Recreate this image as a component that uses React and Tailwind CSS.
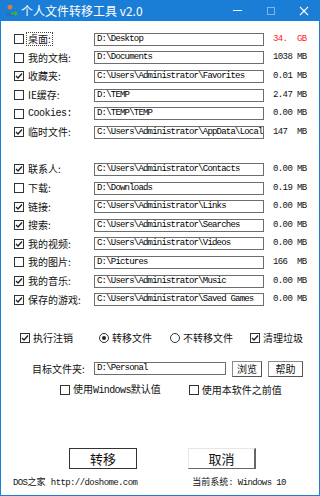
import React from 'react';

const CN = { fontFamily: '"Noto Sans CJK SC", "Noto Sans", sans-serif' };
const MONO = { fontFamily: '"Liberation Mono", "DejaVu Sans Mono", monospace' };

const ROWS = [
  { label: '桌面:', path: 'D:\\Desktop', size: '34.  GB', checked: false, red: true, focus: true },
  { label: '我的文档:', path: 'D:\\Documents', size: '1038 MB', checked: false },
  { label: '收藏夹:', path: 'C:\\Users\\Administrator\\Favorites', size: '0.01 MB', checked: true },
  { label: 'IE缓存:', path: 'D:\\TEMP', size: '2.47 MB', checked: false },
  { label: 'Cookies:', path: 'D:\\TEMP\\TEMP', size: '0.00 MB', checked: false, mono: true },
  { label: '临时文件:', path: 'C:\\Users\\Administrator\\AppData\\Local', size: '147  MB', checked: true },
  null,
  { label: '联系人:', path: 'C:\\Users\\Administrator\\Contacts', size: '0.00 MB', checked: true },
  { label: '下载:', path: 'D:\\Downloads', size: '0.19 MB', checked: false },
  { label: '链接:', path: 'C:\\Users\\Administrator\\Links', size: '0.00 MB', checked: true },
  { label: '搜索:', path: 'C:\\Users\\Administrator\\Searches', size: '0.00 MB', checked: true },
  { label: '我的视频:', path: 'C:\\Users\\Administrator\\Videos', size: '0.00 MB', checked: true },
  { label: '我的图片:', path: 'D:\\Pictures', size: '166  MB', checked: false },
  { label: '我的音乐:', path: 'C:\\Users\\Administrator\\Music', size: '0.00 MB', checked: true },
  { label: '保存的游戏:', path: 'C:\\Users\\Administrator\\Saved Games', size: '0.00 MB', checked: true },
];

function Check({ checked }) {
  return (
    <div className="w-[10px] h-[10px] border border-[#333] bg-white flex items-center justify-center shrink-0">
      {checked && (
        <svg width="8" height="8" viewBox="0 0 8 8">
          <path d="M1 4 L3 6 L7 1.5" fill="none" stroke="#222" strokeWidth="1.4" />
        </svg>
      )}
    </div>
  );
}

function Radio({ checked }) {
  return (
    <div className="w-[10px] h-[10px] rounded-full border border-[#333] bg-white flex items-center justify-center shrink-0">
      {checked && <div className="w-[4px] h-[4px] rounded-full bg-[#222]" />}
    </div>
  );
}

function Edit({ value, className = '' }) {
  return (
    <div
      className={`h-[13px] border border-[#6d6d6d] bg-white pl-[2px] flex items-center overflow-hidden whitespace-pre text-[9px] tracking-[-0.8px] text-black leading-none shrink-0 ${className}`}
      style={MONO}
    >
      {value}
    </div>
  );
}

function FileRow({ row }) {
  if (!row) return <div className="h-[18.6px]" />;
  return (
    <div className="h-[18.6px] flex items-center">
      <div className="pl-[13px] w-[93px] flex items-center shrink-0">
        <Check checked={row.checked} />
        <span
          className={`ml-[3px] px-px text-[10px] leading-[12px] text-[#111] whitespace-nowrap ${row.focus ? 'outline outline-1 outline-dotted outline-[#444]' : ''} ${row.mono ? 'tracking-[-0.5px]' : ''}`}
          style={row.mono ? MONO : CN}
        >
          {row.label}
        </span>
      </div>
      <Edit value={row.path} className="w-[170px]" />
      <span
        className={`ml-[9px] text-[9px] tracking-[-0.6px] whitespace-pre leading-none ${row.red ? 'text-[#ff1a1a]' : 'text-[#111]'}`}
        style={MONO}
      >
        {row.size}
      </span>
    </div>
  );
}

function AppIcon() {
  return (
    <svg width="13" height="13" viewBox="0 0 13 13">
      <circle cx="5" cy="3.2" r="2.4" fill="#e07b39" />
      <path d="M1 12 C1 7.5 9 7.5 9 12 Z" fill="#2d6fb8" />
      <path d="M6 8.5 H10 V6.5 L13 9.5 L10 12.5 V10.5 H6 Z" fill="#3fae3f" />
    </svg>
  );
}

export default function App() {
  return (
    <div className="w-[320px] h-[496px] bg-white border-x border-b border-[#1a7ed6] flex flex-col text-[#111] overflow-hidden">
      {/* title bar */}
      <div className="h-[21px] bg-[#1a7ed6] flex items-center shrink-0 -mx-px">
        <div className="ml-[5px]"><AppIcon /></div>
        <span className="ml-[3px] text-white text-[12px] leading-none" style={CN}>个人文件转移工具 v2.0</span>
        <div className="ml-auto flex items-center h-full">
          <div className="w-[33px] h-full flex items-center justify-center">
            <div className="w-[9px] h-px bg-white" />
          </div>
          <div className="w-[33px] h-full flex items-center justify-center">
            <div className="w-[8px] h-[8px] border border-[#7fb6e8]" />
          </div>
          <div className="w-[33px] h-full flex items-center justify-center">
            <svg width="10" height="10" viewBox="0 0 10 10">
              <path d="M1 1 L9 9 M9 1 L1 9" stroke="#fff" strokeWidth="1.1" />
            </svg>
          </div>
        </div>
      </div>

      <div className="mt-[9px] flex flex-col">
        {ROWS.map((r, i) => <FileRow key={i} row={r} />)}
      </div>

      {/* options */}
      <div className="mt-[22px] h-[14px] flex items-center text-[10px] leading-none whitespace-nowrap" style={CN}>
        <div className="ml-[19px] flex items-center shrink-0">
          <Check checked />
          <span className="ml-[3px]">执行注销</span>
        </div>
        <div className="ml-[26px] flex items-center shrink-0">
          <Radio checked />
          <span className="ml-[3px]">转移文件</span>
        </div>
        <div className="ml-[18px] flex items-center shrink-0">
          <Radio checked={false} />
          <span className="ml-[3px]">不转移文件</span>
        </div>
        <div className="ml-[17px] flex items-center shrink-0">
          <Check checked />
          <span className="ml-[3px]">清理垃圾</span>
        </div>
      </div>

      <div className="mt-[16px] h-[16px] flex items-center whitespace-nowrap">
        <span className="ml-[31px] w-[62px] shrink-0 text-[10px] leading-none" style={CN}>目标文件夹:</span>
        <Edit value="D:\Personal" className="w-[132px]" />
        <button className="ml-[6px] w-[30px] h-[16px] shrink-0 border border-[#8a8a8a] border-r-[#555] border-b-[#555] bg-white text-[10px] leading-none" style={CN}>浏览</button>
        <button className="ml-[6px] w-[35px] h-[16px] shrink-0 border border-[#8a8a8a] border-r-[#555] border-b-[#555] bg-white text-[10px] leading-none" style={CN}>帮助</button>
      </div>

      <div className="mt-[7px] h-[12px] flex items-center text-[10px] leading-none whitespace-nowrap" style={CN}>
        <div className="ml-[59px] flex items-center shrink-0">
          <Check checked={false} />
          <span className="ml-[3px]">使用<span style={MONO} className="tracking-[-0.6px]">Windows</span>默认值</span>
        </div>
        <div className="ml-[28px] flex items-center shrink-0">
          <Check checked={false} />
          <span className="ml-[3px]">使用本软件之前值</span>
        </div>
      </div>

      <div className="mt-[52px] flex items-center">
        <button className="ml-[68px] w-[68px] h-[21px] border border-[#333] bg-white text-[13px] leading-none" style={CN}>转移</button>
        <button className="ml-[51px] w-[68px] h-[21px] border border-[#e6e6e6] border-r-[#666] border-b-[#666] border-r-2 bg-white text-[13px] leading-none" style={CN}>取消</button>
      </div>

      <div className="mt-[8px] flex items-center text-[9px] leading-none whitespace-pre">
        <span className="ml-[12px]" style={MONO}><span className="tracking-[-0.6px]">DOS</span><span style={CN}>之家</span> <span className="tracking-[-0.6px]">http://doshome.com</span></span>
        <span className="ml-[55px]"><span style={CN}>当前系统</span><span style={MONO} className="tracking-[-0.6px]">: Windows 10</span></span>
      </div>
    </div>
  );
}
